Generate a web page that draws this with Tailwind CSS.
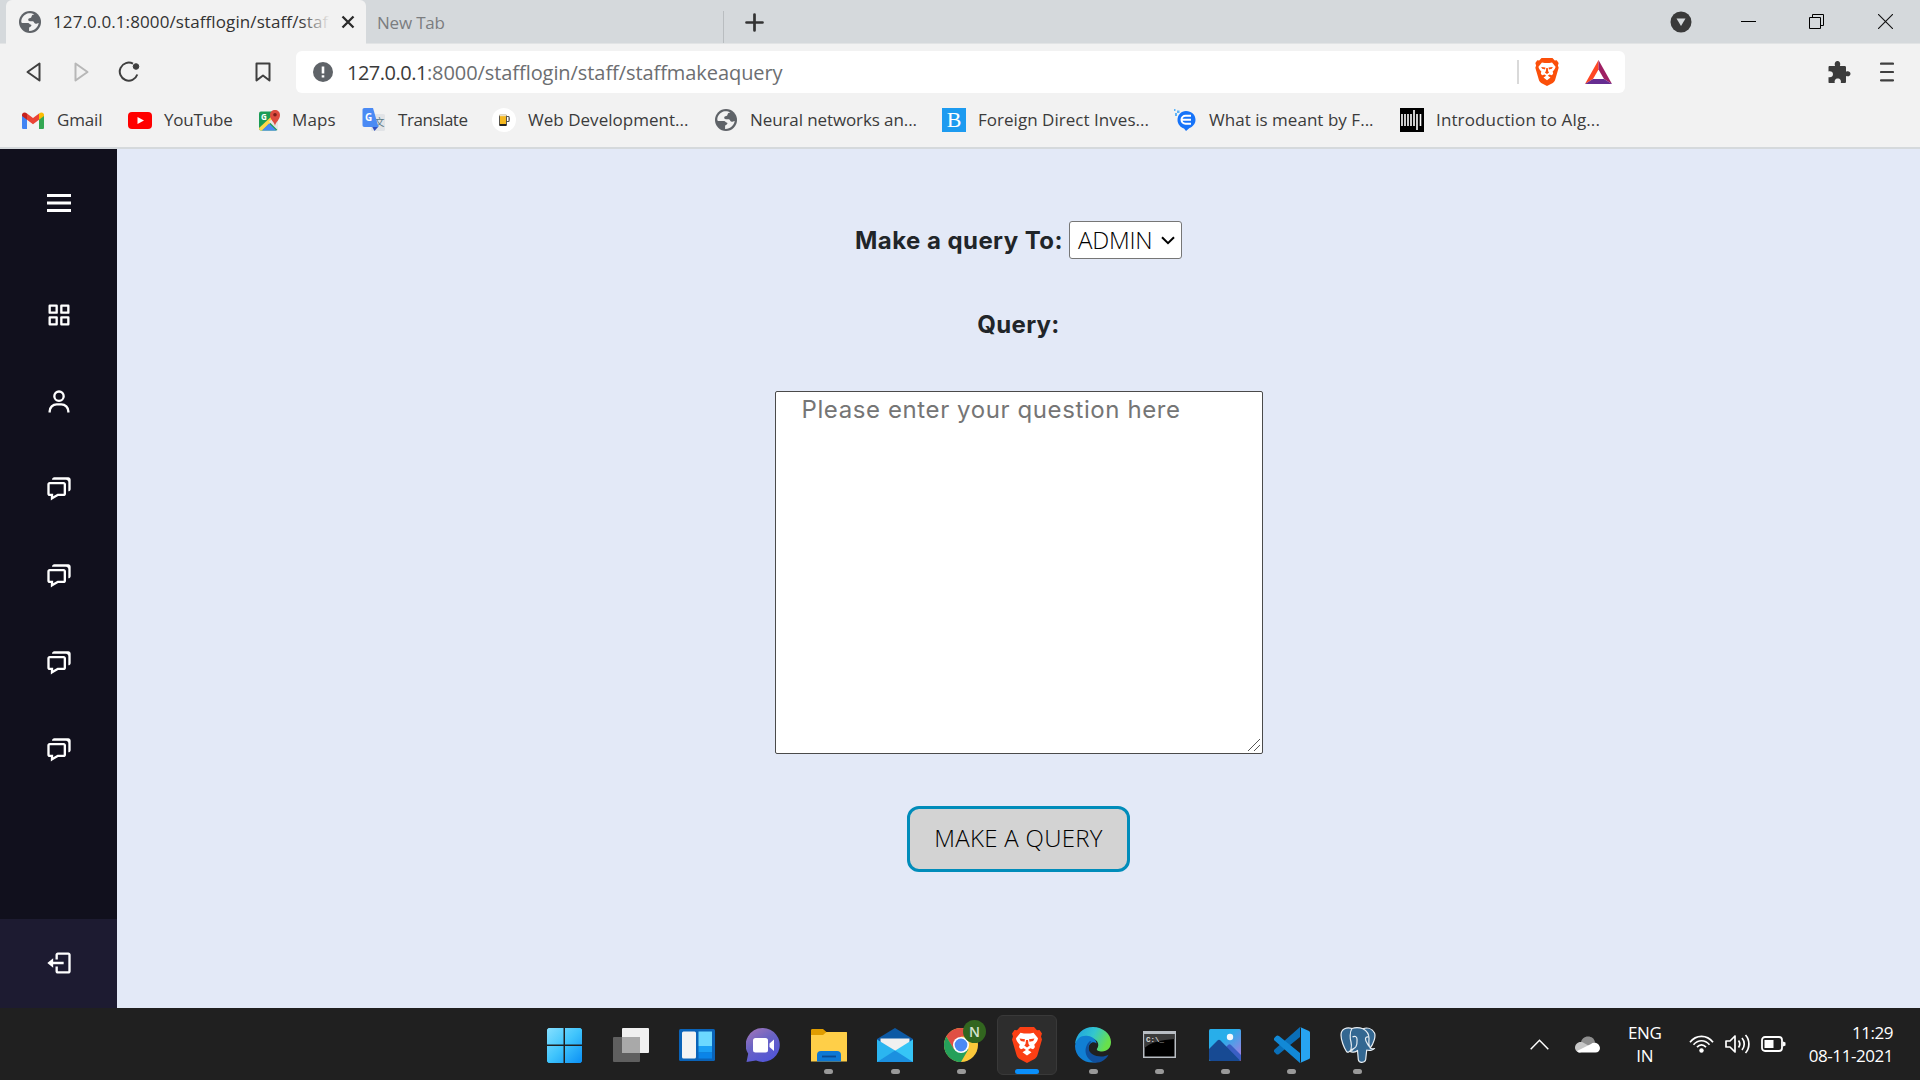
<!DOCTYPE html>
<html lang="en">
<head>
<meta charset="utf-8">
<title>127.0.0.1:8000/stafflogin/staff/staffmakeaquery</title>
<script src="https://cdn.jsdelivr.net/npm/@tailwindcss/browser@4"></script>
</head>
<body class="flex h-[1080px] w-[1920px] flex-col overflow-hidden bg-[#e3e9f7] font-['Open_Sans',sans-serif] text-[17px] leading-6 text-[#3b3b3b]">
<svg class="hidden">
  <symbol id="globe" viewBox="0 0 24 24"><circle cx="12" cy="12" r="12" fill="#5f6368"/><path d="M10.500 2.500c-4 .5-8 4.500-8 9 0 1 .3 1.600 1 1.600h6.500c1.300 0 1.500 1.500 2.500 1.700 1.500.2 1.200 1.500.3 2-1.300.6-1.800 1-1.800 2.200V21.700c5.500.3 9.800-4 10.500-8.700-1.500.2-2 .9-3.300.9-2 0-1.500-2.400-3-2.600-2-.3-5.200.2-5.200-1.800 0-2 2.300-1.500 3.300-2.500.8-.9.400-2.600 2.200-2.800l1.200-.2c-1.600-1.200-4-1.700-6.200-1.500z" fill="#f2f2f2"/></symbol>
  <symbol id="lion" viewBox="0 0 30 36"><path d="M8 0h14l3 3.200 2.500-.3L30 6.500l-1 3 1 3-4.500 15.500c-.5 1.800-1.600 3-3 4L15 36l-7.500-4c-1.400-1-2.500-2.200-3-4L0 12.500l1-3-1-3 2.500-3.600 2.500.3z"/><path d="M8.500 5.800L12 6.500h6l3.500-.7L26 11.200c-.2 2.500-2 4.300-3.800 6.600 1.300 2 .7 3.300-1.200 4.500l-2.700-1-2.300 1.600 3.500 2.300L15 28.500l-4.500-3.300 3.500-2.300-2.300-1.600-2.700 1c-1.900-1.200-2.500-2.500-1.200-4.500C6 15.500 4.200 13.700 4 11.200z" fill="#fff"/><path d="M7.500 11.500l5.500.8-.5 2.400-3.700-.8zM22.500 11.500l-5.500.8.5 2.400 3.700-.8zM14 13h2l.5 4 1.200 1.500L15 20.500l-2.700-2L13.500 17z"/></symbol>
  <symbol id="chat" viewBox="0 0 24 24"><path d="M5 18v3.766l1.515-.909L11.277 18H16c1.103 0 2-.897 2-2V8c0-1.103-.897-2-2-2H4c-1.103 0-2 .897-2 2v8c0 1.103.897 2 2 2h1zM4 8h12v8h-5.277L7 18.234V16H4V8z"/><path d="M20 2H8c-1.103 0-2 .897-2 2h12c1.103 0 2 .897 2 2v8c1.103 0 2-.897 2-2V4c0-1.103-.897-2-2-2z"/></symbol>
</svg>

<!-- Tab strip -->
<header class="flex h-[44px] shrink-0 border-b border-[#e2e4e5] bg-[#d5d9dc] pl-[6px]">
  <div class="flex h-[44px] w-[360px] items-center rounded-t-md bg-[#f2f2f2] pl-[13px]">
    <svg class="size-[22px]"><use href="#globe"/></svg>
    <div class="relative ml-[12px] w-[277px] overflow-hidden whitespace-nowrap font-medium tracking-[0.1px] text-[#333]">127.0.0.1:8000/stafflogin/staff/staf<span class="absolute inset-y-0 right-0 w-[30px] bg-linear-to-r from-[#f2f2f2]/0 to-[#f2f2f2]"></span></div>
    <svg class="ml-[11px] size-[14px]" viewBox="0 0 14 14" fill="none" stroke="#2b2b2b" stroke-width="2.300"><path d="M1.500 1.500l11 11M12.500 1.500l-11 11"/></svg>
  </div>
  <div class="flex h-[45px] w-[357px] items-center pl-[11px] tracking-[-0.2px] text-[#7b7d80]">New Tab</div>
  <div class="mt-[11px] h-[32px] w-px bg-[#b9bdc0]"></div>
  <svg class="ml-[21px] mt-[13px] size-[19px]" viewBox="0 0 19 19" stroke="#333" stroke-width="2.700" stroke-linecap="round"><path d="M9.500 1.500v16M1.500 9.500h16"/></svg>
  <div class="ml-auto flex h-[43px] items-center pr-[27px]">
    <svg class="mr-[49px] size-[22px]" viewBox="0 0 22 22"><circle cx="11" cy="11" r="10.500" fill="#3a3a3a"/><path d="M6.500 7.500h9l-4.500 7.500z" fill="#d5d9dc"/></svg>
    <div class="mr-[53px] h-px w-[15px] bg-black"></div>
    <svg class="mr-[54px] size-[15px]" viewBox="0 0 15 15" fill="none" stroke="#000"><path d="M.5 3.500h11v11H.5zM3.500 3.500v-3h11v11h-3"/></svg>
    <svg class="size-[15px]" viewBox="0 0 15 15" stroke="#111" stroke-width="1.100"><path d="M0 0l15 15M15 0L0 15"/></svg>
  </div>
</header>

<!-- Address bar -->
<div class="flex h-[56px] shrink-0 items-center bg-[#f2f2f2] pl-[26px]">
  <svg class="h-[20px] w-[15px]" viewBox="0 0 15 20" fill="none" stroke="#3f3f3f" stroke-width="2" stroke-linejoin="round"><path d="M13.500 1.500v17L1.500 10z"/></svg>
  <svg class="ml-[33px] h-[20px] w-[16px]" viewBox="0 0 16 20" fill="none" stroke="#b7b7b7" stroke-width="2" stroke-linejoin="round"><path d="M1.500 1.500v17L13.500 10z"/></svg>
  <svg class="ml-[28px] size-[22px]" viewBox="0 0 22 22" fill="none" stroke="#3f3f3f" stroke-width="2"><path d="M15 2.700A9 9 0 1 0 19.300 13.500"/><circle cx="18" cy="5.500" r="2.800" fill="#3f3f3f" stroke-width="1"/></svg>
  <svg class="ml-[115px] h-[20px] w-[16px]" viewBox="0 0 16 20" fill="none" stroke="#3f3f3f" stroke-width="2" stroke-linejoin="round"><path d="M1.500 1.500h13v17L8 13.500l-6.500 5z"/></svg>
  <div class="ml-[25px] flex h-[42px] w-[1329px] items-center rounded-md bg-white pl-[17px]">
    <svg class="size-[20px]" viewBox="0 0 20 20"><circle cx="10" cy="10" r="10" fill="#5f6368"/><path d="M8.700 4.500h2.600v7H8.700zM8.700 13.200h2.600v2.300H8.700z" fill="#fff"/></svg>
    <div class="ml-[14px] pt-px text-[20px] tracking-[-0.07px] text-[#6c6e71]"><span class="tracking-[-0.5px] text-[#3a3a3a]">127.0.0.1</span>:8000/stafflogin/staff/staffmakeaquery</div>
    <div class="ml-auto h-[24px] w-[2px] bg-[#d9d9d9]"></div>
    <svg class="ml-[16px] h-[28px] w-[24px]" fill="#fb4f0a"><use href="#lion"/></svg>
    <svg class="ml-[26px] mr-[13px] h-[24px] w-[27px]" viewBox="0 0 27 24"><path d="M13.500 0L0 24l8-5 5.500-9.500z" fill="#ff4724"/><path d="M13.500 0L27 24l-8-5-5.500-9.500z" fill="#9e1f63"/><path d="M0 24h27l-8-5H8z" fill="#662d91"/></svg>
  </div>
  <svg class="ml-[203px] size-[23px]" viewBox="0 0 23 23" fill="#3c3c3c"><path d="M1.500 5h5.600C6 2.200 7.500 0 9.500 0s3.500 2.200 2.400 5h4.600c1 0 1.500.5 1.500 1.500v4.200c2.400-1 4.500 0 4.500 2.100s-2.100 3.200-4.500 2.200v5.500c0 1-.5 1.500-1.500 1.500h-3.700c.7-2.700-.7-4.500-3-4.500s-3.700 1.800-3 4.500H1.500C.7 22 .5 21.500.5 20.500v-4.300c2.700.5 4.500-.7 4.500-2.900S3.200 9.800.5 10.400V6.500C.5 5.500.7 5 1.500 5z"/></svg>
  <svg class="ml-[29px] h-[20px] w-[14px]" viewBox="0 0 14 20" stroke="#3f3f3f" stroke-width="2.200" stroke-linecap="round"><path d="M1 1.700h12M1 10h12M1 18.300h12"/></svg>
</div>

<!-- Bookmarks -->
<nav class="flex h-[49px] shrink-0 items-center whitespace-nowrap border-b-2 border-[#d5d9dc] bg-[#f2f2f2] pb-[7px] pl-[22px]">
  <svg class="h-[17px] w-[22px]" viewBox="0 0 22 17"><path d="M0 2.500l5 3.700V17H1.500C.5 17 0 16.500 0 15.500z" fill="#4285f4"/><path d="M17 6.200l5-3.700v13c0 1-.5 1.500-1.500 1.500H17z" fill="#34a853"/><path d="M17 1.600C19-.5 22 .2 22 3v1l-5 3.700z" fill="#fbbc04"/><path d="M5 1.600l6 4.500 6-4.500v6.100l-6 4.500-6-4.500z" fill="#ea4335"/><path d="M0 3C0 .2 3-.5 5 1.600v6.100L0 4z" fill="#c5221f"/></svg>
  <span class="ml-[13px] w-[71px] tracking-[-0.15px]">Gmail</span>
  <svg class="h-[17px] w-[24px]" viewBox="0 0 24 17"><rect width="24" height="17" rx="4" fill="#f00"/><path d="M9.500 5l6.500 3.500L9.500 12z" fill="#fff"/></svg>
  <span class="ml-[12px] w-[94px] tracking-[-0.2px]">YouTube</span>
  <svg class="size-[23px]" viewBox="0 0 23 23"><rect x="1" y="2.500" width="19" height="19" rx="2" fill="#1a9c55"/><path d="M1 19L15 6l3 3L4 21.500H3c-1.500 0-2-1-2-2.500z" fill="#ffd84a"/><path d="M11 14.500L18.500 21.500H4z" fill="#4a89f3"/><path d="M11 12.500L20 21.500V11l-3-3z" fill="#e5e5e5"/><text x="3" y="10.500" font-size="8" font-weight="700" fill="#fff">G</text><path d="M17 17c-.5-4-5-6-5-11 0-3 2.200-5 5-5s5 2 5 5c0 5-4.500 7-5 11z" fill="#dd4b3e"/><circle cx="17" cy="5.800" r="1.800" fill="#7c1f1a"/></svg>
  <span class="ml-[11px] w-[70px] tracking-[0.1px]">Maps</span>
  <svg class="size-[24px]" viewBox="0 0 24 24"><rect x="9" y="6" width="14" height="17" rx="1.500" fill="#e2e4e7"/><text x="12.500" y="18" font-size="10" font-family="Noto Sans CJK SC" fill="#5b7a86">文</text><path d="M10 18.500h6.500l-4 4.500z" fill="#3050c0"/><path d="M2.500 0H11l5.500 19h-14C1 19 .5 18 .5 17V2C.5.7 1 0 2.500 0z" fill="#4a8af4"/><text x="3" y="13" font-size="10" font-weight="700" fill="#fff">G</text></svg>
  <span class="ml-[12px] w-[94px] tracking-[-0.45px]">Translate</span>
  <svg class="size-[24px]" viewBox="0 0 24 24"><circle cx="12" cy="12" r="12" fill="#fff"/><path d="M14 8.500h2.500c1 0 1 5 0 5H14" fill="none" stroke="#555" stroke-width="1.200"/><rect x="7.500" y="7" width="7" height="10.500" rx="1" fill="#f5b921" stroke="#444" stroke-width=".9"/><path d="M7.500 6.200h7v2h-7z" fill="#e9e0c8"/><path d="M7.500 16h7v2h-7z" fill="#222"/></svg>
  <span class="ml-[12px] w-[187px] tracking-[0.03px]">Web Development...</span>
  <svg class="size-[22px]"><use href="#globe"/></svg>
  <span class="ml-[13px] w-[192px] tracking-[-0.1px]">Neural networks an...</span>
  <div class="flex size-[24px] items-center justify-center bg-[#1d9bf0] font-['Liberation_Serif',serif] text-[22px] text-white">B</div>
  <span class="ml-[12px] w-[195px] tracking-[0.03px]">Foreign Direct Inves...</span>
  <svg class="size-[24px]" viewBox="0 0 24 24"><path d="M13 3c5.500 0 9.500 3.800 9.500 8.700 0 3.800-2.500 6.900-6 8.200L13 23l-2-2.600C7.500 19.500 4.500 16 4.500 12 4.500 7 8 3 13 3z" fill="#1673f9"/><path d="M18 7.700h-5.500a4 4 0 0 0 0 8H18M9.500 11.700H18" stroke="#fff" stroke-width="2" fill="none"/><path d="M1 1h1.500v2H1zM4 2.500h2.500V5H4zM2 5h2v3H2z" fill="#5db4f8"/></svg>
  <span class="ml-[12px] w-[191px] tracking-[0.03px]">What is meant by F...</span>
  <svg class="size-[24px]" viewBox="0 0 24 24"><path d="M0 0h24v24H0z"/><path d="M2 6v12M5 6v12M8 6v12M11 6v12M14 2v16M17 6v16M20.500 6v12" stroke="#fff" stroke-width="1.600"/></svg>
  <span class="ml-[12px] tracking-[0.13px]">Introduction to Alg...</span>
</nav>

<!-- Page -->
<div class="flex min-h-0 flex-1">
  <aside class="flex w-[117px] shrink-0 flex-col bg-[#11101d] fill-white">
    <div class="flex h-[107px] items-center justify-center"><svg class="size-[36px]" viewBox="0 0 24 24"><path d="M4 6h16v2H4zm0 5h16v2H4zm0 5h16v2H4z"/></svg></div>
    <ul class="flex flex-col pt-[15px]">
      <li class="flex h-[87px] items-center justify-center"><svg class="size-[28px]" viewBox="0 0 24 24"><path d="M10 3H4a1 1 0 0 0-1 1v6a1 1 0 0 0 1 1h6a1 1 0 0 0 1-1V4a1 1 0 0 0-1-1zM9 9H5V5h4v4zm11-6h-6a1 1 0 0 0-1 1v6a1 1 0 0 0 1 1h6a1 1 0 0 0 1-1V4a1 1 0 0 0-1-1zm-1 6h-4V5h4v4zm-9 4H4a1 1 0 0 0-1 1v6a1 1 0 0 0 1 1h6a1 1 0 0 0 1-1v-6a1 1 0 0 0-1-1zm-1 6H5v-4h4v4zm11-6h-6a1 1 0 0 0-1 1v6a1 1 0 0 0 1 1h6a1 1 0 0 0 1-1v-6a1 1 0 0 0-1-1zm-1 6h-4v-4h4v4z"/></svg></li>
      <li class="flex h-[87px] items-center justify-center"><svg class="size-[28px]" viewBox="0 0 24 24"><path d="M12 2a5 5 0 1 0 5 5 5 5 0 0 0-5-5zm0 8a3 3 0 1 1 3-3 3 3 0 0 1-3 3zm9 11v-1a7 7 0 0 0-7-7h-4a7 7 0 0 0-7 7v1h2v-1a5 5 0 0 1 5-5h4a5 5 0 0 1 5 5v1z"/></svg></li>
      <li class="flex h-[87px] items-center justify-center"><svg class="size-[28px]"><use href="#chat"/></svg></li>
      <li class="flex h-[87px] items-center justify-center"><svg class="size-[28px]"><use href="#chat"/></svg></li>
      <li class="flex h-[87px] items-center justify-center"><svg class="size-[28px]"><use href="#chat"/></svg></li>
      <li class="flex h-[87px] items-center justify-center"><svg class="size-[28px]"><use href="#chat"/></svg></li>
    </ul>
    <div class="mt-auto flex h-[89px] items-center justify-center bg-[#1d1b31] pb-px"><svg class="size-[28px]" viewBox="0 0 24 24"><path d="M16 13v-2H7V8l-5 4 5 4v-3z"/><path d="M20 3h-9c-1.103 0-2 .897-2 2v4h2V5h9v14h-9v-4H9v4c0 1.103.897 2 2 2h9c1.103 0 2-.897 2-2V5c0-1.103-.897-2-2-2z"/></svg></div>
  </aside>
  <main class="flex flex-1 flex-col items-center pt-[72px] font-['Inter',sans-serif] text-[24px] leading-9 text-[#212529]">
    <div class="flex items-center">
      <label class="mr-[6px] pt-[2px] font-bold tracking-[0.45px]">Make a query To:</label>
      <div class="flex h-[38px] w-[113px] items-center justify-between rounded-[3px] border border-[#767676] bg-white pl-[8px] pr-[6px] font-['Open_Sans',sans-serif] text-black">
        <span class="font-light tracking-[-0.2px]">ADMIN</span>
        <svg class="h-[9px] w-[14px]" viewBox="0 0 14 9" fill="none" stroke="#000" stroke-width="2"><path d="M1 1.200l6 6 6-6"/></svg>
      </div>
    </div>
    <label class="mt-[48px] font-bold tracking-[0.3px]">Query:</label>
    <div class="relative mt-[48px] h-[363px] w-[488px] rounded-[2px] border border-[#4a4a4a] bg-white pl-[26px] tracking-[0.6px] text-[#757575]">Please enter your question here
      <svg class="absolute bottom-[2px] right-[2px] size-[12px]" viewBox="0 0 12 12" stroke="#555"><path d="M0 12L12 0M6 12l6-6"/></svg>
    </div>
    <button class="mt-[52px] h-[66px] w-[223px] rounded-[12px] border-3 border-[#008cba] bg-[#d3d3d3] pb-[2px] font-['Open_Sans',sans-serif] font-light tracking-[0.3px] text-black">MAKE A QUERY</button>
  </main>
</div>

<!-- Taskbar -->
<footer class="flex h-[72px] shrink-0 bg-[#202020] pl-[531.5px] text-white">
  <div class="flex">
    <div class="flex w-[66.1px] justify-center pt-[20px]"><svg class="size-[35px]" viewBox="0 0 35 35"><defs><linearGradient id="w" x2="1" y2="1"><stop stop-color="#86e0ff"/><stop offset=".5" stop-color="#3fc4fc"/><stop offset="1" stop-color="#0a8ff5"/></linearGradient></defs><path d="M1.500 0H16.500V16.500H0V1.500zM18 0h15.500L35 1.500v15H18zM0 18h16.500v17h-15L0 33.500zM18 18h17v15.500L33.500 35H18z" fill="url(#w)"/></svg></div>
    <div class="flex w-[66.1px] justify-center pt-[20px]"><svg class="h-[34px] w-[36px]" viewBox="0 0 36 34"><rect x="9" width="27" height="25" rx="1" fill="#f0f0f0"/><rect y="9" width="27" height="25" rx="1" fill="#5f5f5f"/><path d="M9 9h18v16H9z" fill="#a9a9a9"/></svg></div>
    <div class="flex w-[66.1px] justify-center pt-[21px]"><svg class="h-[32px] w-[36px]" viewBox="0 0 36 32"><rect width="36" height="32" rx="1.500" fill="#0a63b8"/><rect x="3" y="2.500" width="14" height="27" rx="1.500" fill="#f3f3f3"/><path d="M19.500 2.500H33V17H19.500z" fill="#6cd8ff"/><path d="M19.500 17H33v6.500H19.500z" fill="#1ba0f5"/><path d="M19.500 23.500H33v6H19.500z" fill="#0a84e8"/></svg></div>
    <div class="flex w-[66.1px] justify-center pt-[20px]"><svg class="size-[34px]" viewBox="0 0 34 34"><defs><linearGradient id="t" x2=".6" y2="1"><stop stop-color="#a878b8"/><stop offset=".5" stop-color="#6a63c4"/><stop offset="1" stop-color="#5356d6"/></linearGradient></defs><path d="M17 0a17 17 0 1 1-7 32.600L.5 34l1.700-8.200A17 17 0 0 1 17 0z" fill="url(#t)"/><rect x="7" y="10" width="15" height="14.500" rx="2.500" fill="#fff"/><path d="M23.500 15.500L28 11.500v11.500l-4.500-4z" fill="#fff"/></svg></div>
    <div class="flex w-[66.1px] flex-col items-center pt-[21px]"><svg class="h-[33px] w-[36px]" viewBox="0 0 36 33"><path d="M0 1.500C0 .5.500 0 1.500 0H12l3.500 3H36v8H0z" fill="#e09d00"/><path d="M0 6h12l3.500-3H34.500C35.500 3 36 3.500 36 4.500V32.500H0z" fill="#ffcf48"/><path d="M6 32.500V26c0-2.500 1.300-4 4-4h16c2.700 0 4 1.500 4 4v6.500z" fill="#0d78d4"/><path d="M11 27.500h14" stroke="#0a4a91" stroke-width="1.800"/></svg><span class="mt-[7px] h-[5px] w-[9px] rounded-full bg-[#999]"></span></div>
    <div class="flex w-[66.1px] flex-col items-center pt-[20px]"><svg class="h-[34px] w-[36px]" viewBox="0 0 36 34"><path d="M0 11L18 0l18 11v4H0z" fill="#0c59a4"/><path d="M3.500 10.500h29V24h-29z" fill="#f0f0f0"/><path d="M0 11.500l18 11V34H0z" fill="#2bb5f0"/><path d="M36 11.500L0 34h36z" fill="#36c5f6"/><path d="M18 22.500L36 34H0z" fill="#1b90e0"/></svg><span class="mt-[7px] h-[5px] w-[9px] rounded-full bg-[#999]"></span></div>
    <div class="relative flex w-[66.1px] flex-col items-center pt-[20px]"><svg class="size-[34px]" viewBox="0 0 34 34"><circle cx="17" cy="17" r="17" fill="#fbc83a"/><path d="M2.300 8.500A17 17 0 0 1 31.700 8.500H17L9.600 21z" fill="#e04f43"/><path d="M2.300 8.500A17 17 0 0 0 17 34l7.400-12.700H10z" fill="#25a05a"/><circle cx="17" cy="17" r="8" fill="#fff"/><circle cx="17" cy="17" r="6.400" fill="#4a89f3"/></svg><span class="absolute left-[35px] top-[12px] flex size-[23px] items-center justify-center rounded-full bg-[#32661f] text-[14px] font-semibold text-[#d5e3cf]">N</span><span class="mt-[7px] h-[5px] w-[9px] rounded-full bg-[#999]"></span></div>
    <div class="flex w-[66.1px] justify-center pt-[7px]"><div class="flex h-[60px] w-[60px] flex-col items-center rounded-md border border-[#393939] bg-[#2d2d2d] pt-[11px]"><svg class="h-[36px] w-[30px]" fill="#fb3f14"><use href="#lion"/></svg><span class="mt-[6px] h-[5px] w-[24px] rounded-full bg-[#0a8ffb]"></span></div></div>
    <div class="flex w-[66.1px] flex-col items-center pt-[19px]"><svg class="size-[36px]" viewBox="0 0 36 36"><defs><linearGradient id="e" x2="1" y2=".35"><stop stop-color="#1b9de2"/><stop offset=".55" stop-color="#33c6cf"/><stop offset="1" stop-color="#68e04b"/></linearGradient></defs><path d="M0 17C1 7 8 0 18 0s18 7 18 15c0 6-4 9.500-9 9.500-3.500 0-5.800-1.200-5-2.800 3-4 .5-9-4-10C11 9 4 11 0 17z" fill="url(#e)"/><path d="M0 19C1 11 7 8 13 9c5 .5 8.500 4 8.500 7.500-3-3-8-.5-8 5 0 6 5.500 11 11 12.500C14 39 0 32 0 19z" fill="#117fd3"/><path d="M15 14c-7 6-6 18 5 21.700 6 .3 11-3.200 13.500-8-7 4-20 1-20-7 0-3 1-4.500 3-6z" fill="#104f9c"/></svg><span class="mt-[6px] h-[5px] w-[9px] rounded-full bg-[#999]"></span></div>
    <div class="flex w-[66.1px] flex-col items-center pt-[23px]"><svg class="h-[27px] w-[33px]" viewBox="0 0 33 27"><path d="M0 0h33v27H0z" fill="#b9bec4"/><path d="M1.500 3h30v22.500h-30z" fill="#000"/><path d="M1.500 3h30v5C18 9 8 11 1.500 17z" fill="#3c3c3c"/><text x="3" y="10.500" font-size="7.500" font-family="Liberation Mono" font-weight="700" fill="#ddd">C:\_</text></svg><span class="mt-[11px] h-[5px] w-[9px] rounded-full bg-[#999]"></span></div>
    <div class="flex w-[66.1px] flex-col items-center pt-[21px]"><svg class="size-[32px]" viewBox="0 0 32 32"><defs><linearGradient id="p" x2="1" y2="1"><stop offset=".4" stop-color="#28aeea"/><stop offset="1" stop-color="#b477e0"/></linearGradient></defs><rect width="32" height="32" rx="1.500" fill="url(#p)"/><path d="M14 21l5-5c1-1 2-1 3 0l10 10v4.500L30.500 32H20z" fill="#3a5fc4"/><path d="M0 20l8.500-8.500c1-1 2-1 3 0L31 31.500 30 32H1.500L0 30.500z" fill="#174a93"/><circle cx="21" cy="8" r="3.200" fill="#f3f8fc"/></svg><span class="mt-[8px] h-[5px] w-[9px] rounded-full bg-[#999]"></span></div>
    <div class="flex w-[66.1px] flex-col items-center pt-[19px]"><svg class="size-[36px]" viewBox="0 0 36 36"><path d="M26 0v10L5 27c-1 .8-2 .8-2.800 0L.5 25.200c-.8-.8-.8-2 0-2.800z" fill="#0a6fb8"/><path d="M26 36V26L5 9c-1-.8-2-.8-2.800 0L.5 10.800c-.8.8-.8 2 0 2.800z" fill="#1289d6"/><path d="M26 0l9 4c.7.400 1 .8 1 1.500v25c0 .7-.3 1.200-1 1.500l-9 4c1-.5 1-1.500 1-2.500v-31C27 1.500 27 .5 26 0z" fill="#27a4f2"/></svg><span class="mt-[6px] h-[5px] w-[9px] rounded-full bg-[#999]"></span></div>
    <div class="flex w-[66.1px] flex-col items-center pt-[19px]"><svg class="size-[36px]" viewBox="0 0 36 36" fill="#336791" stroke="#e8eef3" stroke-width="1.200" stroke-linejoin="round"><path d="M12 1.500C7 0 1 1.500 1 8c0 5 3 13 5.500 16.500 1.500 1.500 3 .5 4.500-2l2-.5c0 1-2.500 2.500-3 2.500 2 1.200 5.500.8 7.500-1l.8 9c.5 4 6.700 3.500 7.400 0l1-9.500c2 .8 6.300.5 7.800-1.500-2 .3-4 .2-4.300-.5C33.500 17 36 9 34.500 6 32 1 27 .3 23 1.700 19 .4 15 .5 12 1.500z"/><path d="M12 1.500C9.500 5 10 12 11 15c.8 3 .5 5 0 7.500M23 1.700c4 2.300 6 6.500 6 9.500 0 5-1 7 1.200 9.800M12.500 10c2-1.500 4.500-.5 4.500 2s.5 5-1 7.500c-1 1.500-2 2-3 2.500M28.500 10c-2-.5-3 .5-3 2 0 3 2.500 5 3.500 7.500" fill="none"/></svg><span class="mt-[6px] h-[5px] w-[9px] rounded-full bg-[#999]"></span></div>
  </div>
  <div class="ml-auto flex items-center pr-[27px] leading-[23px]">
    <svg class="mr-[26px] h-[11px] w-[19px]" viewBox="0 0 19 11" fill="none" stroke="#fff" stroke-width="1.500"><path d="M.7 10.300L9.500 1.300l8.800 9"/></svg>
    <svg class="mr-[26px] h-[17px] w-[25px]" viewBox="0 0 25 17"><path d="M6 7C6 3 9.500.5 13 .5c3.500 0 6.500 2 7 6L14 11z" fill="#8e8e8e"/><path d="M5 16.500C2 16.500 0 14 0 11.500 0 8 3.500 5 7.500 6.200L18 12 5 16.500z" fill="#c7c7c7"/><path d="M2 15l14-7c3-2.500 8.500-.8 9 4 0 2.500-1.800 4.500-4.500 4.500H5c-1.200 0-2.300-.5-3-1.500z" fill="#fff"/></svg>
    <div class="w-[38px] text-center tracking-[-0.3px]">ENG<br>IN</div>
    <svg class="ml-[25px] h-[18px] w-[25px]" viewBox="0 0 25 18" fill="none" stroke="#fff" stroke-width="1.700"><path d="M1 7.200C7-.7 18-.7 24 7.200M4.500 9.700c4.500-5.300 11.500-5.300 16 0M8 12.200c2.800-3 6.200-3 9 0"/><circle cx="12.500" cy="15.500" r="2.200" fill="#fff" stroke="none"/></svg>
    <svg class="ml-[11px] h-[20px] w-[25px]" viewBox="0 0 25 20" fill="none" stroke="#fff" stroke-width="1.700" stroke-linejoin="round"><path d="M1 7h4l5-5v16l-5-5H1zM13.500 6.500c1.500 2 1.500 5 0 7M17 4c3 3.500 3 8.500 0 12M20.500 1c4.500 5 4.500 13 0 18"/></svg>
    <svg class="ml-[11px] h-[16px] w-[25px]" viewBox="0 0 25 16"><rect x="1" y="1" width="20" height="14" rx="3" fill="none" stroke="#fff" stroke-width="1.800"/><path d="M3.500 4h9v8h-9zM22 5.500l2.500 1v3l-2.500 1z" fill="#fff"/></svg>
    <div class="ml-[23px] text-right tracking-[-0.45px]">11:29<br>08-11-2021</div>
  </div>
</footer>
</body>
</html>
